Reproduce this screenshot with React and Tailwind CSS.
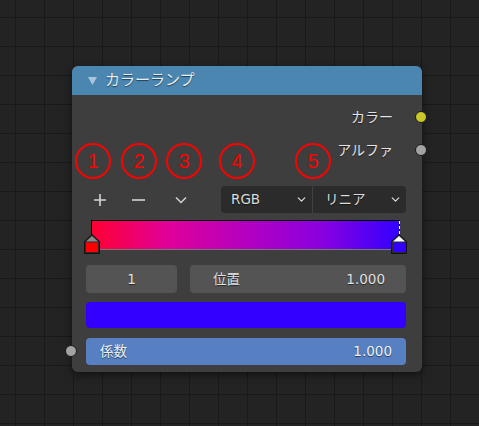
import React from "react";
import { ChevronDown } from "lucide-react";

const font = "font-['DejaVu_Sans','Noto_Sans_CJK_JP',sans-serif]";
const shadow = "[text-shadow:0_1px_1px_rgba(0,0,0,0.55)]";

const marks = [
  { n: "1", left: "left-[3px]" },
  { n: "2", left: "left-[49px]" },
  { n: "3", left: "left-[94px]" },
  { n: "4", left: "left-[147px]" },
  { n: "5", left: "left-[223px]" },
];

const Socket = ({ color, className = "" }) => (
  <span
    className={`block w-[12px] h-[12px] rounded-full border border-[#1a1a1a] ${color} ${className}`}
  />
);

const Stop = ({ fill, top, className }) => (
  <svg className={className} width="16" height="20" viewBox="0 0 16 20">
    <path d="M0.5 7.5 L8 0.5 L15.5 7.5 L15.5 19.5 L0.5 19.5 Z" fill="#2a2a2a" stroke="#111" />
    <path d="M2 7.5 L8 2 L14 7.5 Z" fill={top} />
    <rect x="2" y="8.5" width="12" height="9.5" fill={fill} />
  </svg>
);

const OutputRow = ({ label, color }) => (
  <div className="flex h-[22px] items-center justify-end">
    <span className={`text-[14px] text-[#e4e4e4] ${shadow}`}>{label}</span>
    <Socket color={color} className="ml-[22px] mr-[-21px]" />
  </div>
);

export default function App() {
  return (
    <div
      className={`h-[426px] w-full overflow-hidden bg-[#232323] bg-[linear-gradient(to_right,#191919_1px,transparent_1px),linear-gradient(to_bottom,#191919_1px,transparent_1px)] bg-size-[29px_29px] bg-position-[15px_17px] pt-[66px] pl-[72px] ${font}`}
    >
      <div className="relative w-[350px] rounded-[6px] bg-[rgba(64,64,64,0.96)] shadow-[0_3px_8px_rgba(0,0,0,0.5)]">
        <div className="flex h-[29px] items-center gap-[8px] rounded-t-[6px] bg-[rgba(74,136,180,0.97)] pl-[16px]">
          <svg width="9" height="8" viewBox="0 0 9 8">
            <path d="M0 0 L9 0 L4.5 8 Z" fill="#a8c5db" />
          </svg>
          <span className={`text-[15px] text-[#e8eef3] ${shadow}`}>カラーランプ</span>
        </div>

        <div className="pl-[14px] pr-[16px] pb-[7px]">
          <div className="flex flex-col gap-[11px] pt-[11px]">
            <OutputRow label="カラー" color="bg-[#c8c82a]" />
            <OutputRow label="アルファ" color="bg-[#a3a3a3]" />
          </div>

          <div className="mt-[25px] flex h-[27px] items-center">
            <div className="flex items-center text-[#d4d4d4]">
              <svg className="ml-[7px]" width="14" height="14" viewBox="0 0 14 14">
                <path d="M7 1 V13 M1 7 H13" stroke="currentColor" strokeWidth="1.6" />
              </svg>
              <svg className="ml-[25px]" width="13" height="14" viewBox="0 0 13 14">
                <path d="M0 7 H13" stroke="currentColor" strokeWidth="1.6" />
              </svg>
              <svg className="ml-[30px]" width="12" height="8" viewBox="0 0 12 8">
                <path d="M1 1.5 L6 6.5 L11 1.5" fill="none" stroke="currentColor" strokeWidth="1.5" />
              </svg>
            </div>
            <div className={`ml-auto flex h-[27px] w-[185px] rounded-[4px] bg-[#2b2b2b] text-[13.5px] text-[#dcdcdc] ${shadow}`}>
              <div className="flex w-[92px] items-center justify-between border-r border-[#404040] pl-[10px] pr-[4px]">
                <span>RGB</span>
                <ChevronDown size={13} strokeWidth={2.2} />
              </div>
              <div className="flex flex-1 items-center justify-between pl-[12px] pr-[4px]">
                <span>リニア</span>
                <ChevronDown size={13} strokeWidth={2.2} />
              </div>
            </div>
          </div>

          <div className="relative ml-[5px] mr-[6px] mt-[7px] h-[34px]">
            <div className="relative h-[30px] border border-black border-b-[#777] bg-[linear-gradient(to_right,#ff0033,#e0009a_25%,#b400c0_50%,#8a00e0_75%,#3300ff)]">
              <div className="absolute right-[-1px] top-0 h-full border-r border-dashed border-white" />
            </div>
            <Stop fill="#ff0000" top="#8a8a8a" className="absolute left-[-7px] top-[14px]" />
            <Stop fill="#3300ff" top="#ffffff" className="absolute right-[-7px] top-[14px]" />
          </div>

          <div className={`mt-[11px] flex h-[28px] gap-[13px] text-[13.5px] text-[#e0e0e0] ${shadow}`}>
            <div className="flex w-[91px] items-center justify-center rounded-[4px] bg-[#545454]">1</div>
            <div className="flex flex-1 items-center justify-between rounded-[4px] bg-[#545454] pl-[23px] pr-[21px]">
              <span>位置</span>
              <span>1.000</span>
            </div>
          </div>

          <div className="mt-[9px] h-[26px] rounded-[4px] bg-[#3300ff]" />

          <div className={`relative mt-[10px] flex h-[27px] items-center justify-between rounded-[4px] bg-[#5680c2] pl-[14px] pr-[14px] text-[13.5px] text-[#eef2f8] ${shadow}`}>
            <Socket color="bg-[#a3a3a3]" className="absolute left-[-21px] top-[7px]" />
            <span>係数</span>
            <span>1.000</span>
          </div>
        </div>

        {marks.map((m) => (
          <div
            key={m.n}
            className={`absolute top-[77px] ${m.left} flex h-[36px] w-[36px] items-center justify-center rounded-full border-2 border-[#ff0000] font-['Liberation_Sans',sans-serif] text-[20px] leading-none text-[#ff0000]`}
          >
            {m.n}
          </div>
        ))}
      </div>
    </div>
  );
}
